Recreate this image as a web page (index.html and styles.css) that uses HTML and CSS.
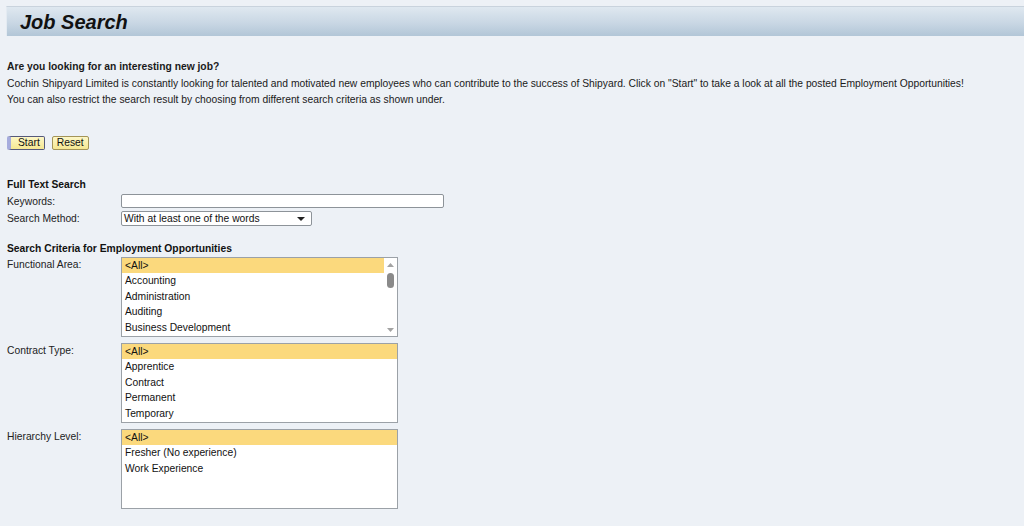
FILE: index.html
```html
<!DOCTYPE html>
<html lang="en">
<head>
    <meta charset="UTF-8">
    <title>Job Search</title>
    <link rel="stylesheet" href="styles.css">
</head>
<body>
    <div class="titlebar"><h1>Job Search</h1></div>
    <div class="page">
        <div class="intro">
            <b>Are you looking for an interesting new job?</b><br>
            Cochin Shipyard Limited is constantly looking for talented and motivated new employees who can contribute to the success of Shipyard. Click on "Start" to take a look at all the posted Employment Opportunities!<br>
            You can also restrict the search result by choosing from different search criteria as shown under.
        </div>
        <div class="buttons">
            <button class="btn btn-focus">Start</button>
            <button class="btn">Reset</button>
        </div>

        <div class="section">Full Text Search</div>
        <div class="row">
            <label class="lbl">Keywords:</label>
            <input type="text" class="txt">
        </div>
        <div class="row">
            <label class="lbl">Search Method:</label>
            <div class="dropdown">
                <span>With at least one of the words</span>
                <svg width="8" height="4" viewBox="0 0 8 4"><path d="M0 0 H8 L4 4 Z" fill="#222"/></svg>
            </div>
        </div>

        <div class="section sec2">Search Criteria for Employment Opportunities</div>
        <div class="row list-row">
            <label class="lbl">Functional Area:</label>
            <div class="listbox">
                <div class="items">
                    <div class="item sel">&lt;All&gt;</div>
                    <div class="item">Accounting</div>
                    <div class="item">Administration</div>
                    <div class="item">Auditing</div>
                    <div class="item">Business Development</div>
                </div>
                <div class="scrollbar">
                    <svg width="7" height="4" viewBox="0 0 7 4"><path d="M0 4 L3.5 0 L7 4 Z" fill="#a3a3a3"/></svg>
                    <div class="thumb"></div>
                    <div class="track"></div>
                    <svg width="7" height="4" viewBox="0 0 7 4"><path d="M0 0 L7 0 L3.5 4 Z" fill="#a3a3a3"/></svg>
                </div>
            </div>
        </div>
        <div class="row list-row">
            <label class="lbl">Contract Type:</label>
            <div class="listbox">
                <div class="items">
                    <div class="item sel">&lt;All&gt;</div>
                    <div class="item">Apprentice</div>
                    <div class="item">Contract</div>
                    <div class="item">Permanent</div>
                    <div class="item">Temporary</div>
                </div>
            </div>
        </div>
        <div class="row list-row">
            <label class="lbl">Hierarchy Level:</label>
            <div class="listbox">
                <div class="items">
                    <div class="item sel">&lt;All&gt;</div>
                    <div class="item">Fresher (No experience)</div>
                    <div class="item">Work Experience</div>
                </div>
            </div>
        </div>
    </div>
</body>
</html>
```
FILE: styles.css
```css
body { margin: 0; background: #edf1f6; color: #111; font-family: "Liberation Sans", Arial, sans-serif; font-size: 10.3px; }
.titlebar { margin: 6px 0 0 6px; height: 29px; border-top: 1px solid #c9d3dd; border-left: 1px solid #e4ebf2; background: linear-gradient(#dfe8f0, #c9d7e4 55%, #b2c6d7); }
.titlebar h1 { margin: 0; padding-left: 13px; font-size: 20px; font-style: italic; font-weight: bold; line-height: 30px; color: #111; }
.page { padding: 0 7px; }
.intro { margin-top: 23px; line-height: 16.5px; color: #1a1a1a; white-space: nowrap; }
.buttons { margin-top: 27px; display: flex; gap: 7px; }
.btn { height: 14px; padding: 0 4px; font-family: inherit; font-size: 10.3px; line-height: 12px; color: #111; background: linear-gradient(#fdf7c6, #f5e792); border: 1px solid #a39458; border-radius: 2px; }
.btn-focus { padding-left: 7px; border-color: #55597a; border-left: 4px solid #a6acdd; }
.section { margin-top: 27px; font-weight: bold; line-height: 16px; }
.sec2 { margin-top: 14px; }
.row { display: flex; align-items: center; height: 17px; }
.lbl { width: 114px; flex: none; color: #222; }
.txt { width: 321px; height: 12px; padding: 0; margin: 0; border: 1px solid #8d9399; border-radius: 2px; background: #fff; }
.dropdown { width: 185px; height: 13px; padding: 0 2px; display: flex; align-items: center; justify-content: space-between; border: 1px solid #8d9399; border-radius: 2px; background: #fff; margin-top: 1px; }
.dropdown span { line-height: 13px; color: #111; }
.dropdown svg { margin-right: 4px; }
.list-row { height: auto; align-items: flex-start; margin-bottom: 6px; }
.list-row .lbl { line-height: 16px; }
.listbox { width: 275px; height: 78px; display: flex; border: 1px solid #9ba1a7; background: #fff; }
.items { flex: 1; }
.item { height: 15.5px; line-height: 15.5px; padding-left: 3px; color: #111; }
.item.sel { background: #fbd97d; }
.scrollbar { width: 13px; display: flex; flex-direction: column; align-items: center; padding: 5px 0 4px; }
.thumb { width: 7px; height: 15px; margin-top: 6px; border-radius: 4px; background: #8a8a8a; }
.track { flex: 1; }
```
